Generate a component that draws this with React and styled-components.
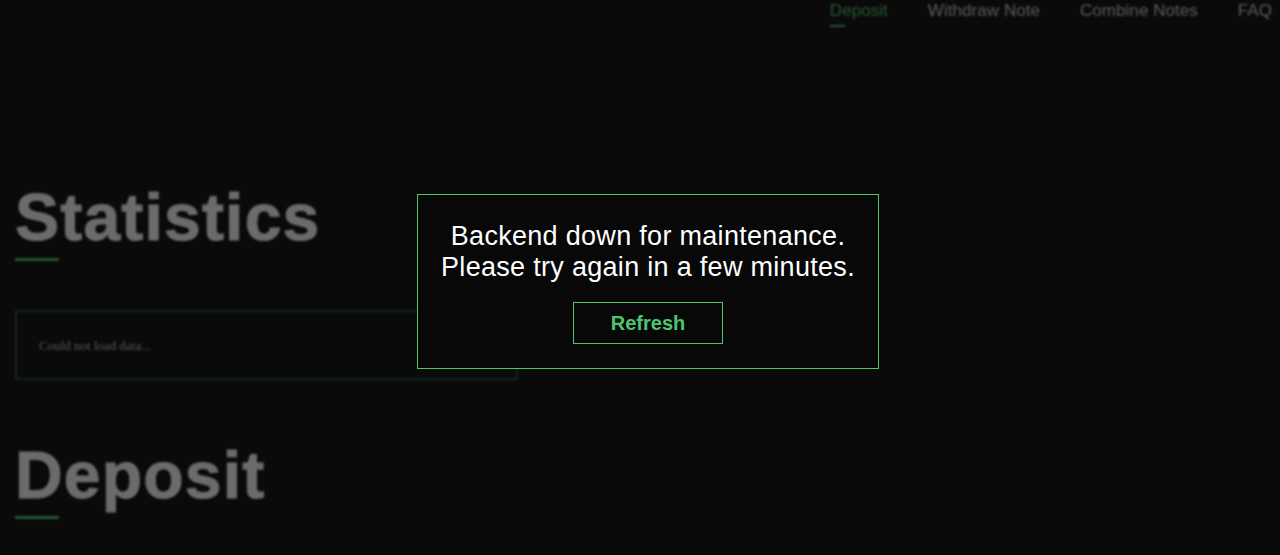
import styled, { createGlobalStyle } from "styled-components";

const GlobalStyle = createGlobalStyle`
  html, body {
    margin: 0;
    padding: 0;
    background: #0a0a0a;
    font-family: "Liberation Sans", Arial, sans-serif;
    overflow: hidden;
  }
`;

const Page = styled.div`
  width: 1280px;
  height: 555px;
  background: #0a0a0a;
  filter: blur(1.2px);
  opacity: 0.42;
`;

const Nav = styled.nav`
  display: flex;
  justify-content: flex-end;
  gap: 40px;
  padding: 0 8px 0 0;
  a {
    position: relative;
    color: #c8c8c8;
    font-size: 17px;
    line-height: 22px;
    letter-spacing: 0.05px;
    text-decoration: none;
  }
  a.active {
    color: #46c46c;
  }
  a.active::after {
    content: "";
    position: absolute;
    left: 0;
    top: 25px;
    width: 15px;
    height: 2px;
    background: #46c46c;
  }
`;

const Main = styled.main`
  padding: 0 15px;
`;

const Section = styled.section`
  margin-top: ${(p) => p.top}px;
`;

const Heading = styled.h1`
  margin: 0;
  color: #f2f2f2;
  font-size: 66px;
  font-weight: 900;
  line-height: 70px;
  letter-spacing: 1.2px;
  -webkit-text-stroke: 1px #f2f2f2;
`;

const Bar = styled.div`
  width: 44px;
  height: 3px;
  margin-top: 6px;
  background: #46c46c;
`;

const InfoBox = styled.div`
  width: 455px;
  height: 64px;
  margin-top: 49px;
  border: 2px solid #1f4d2c;
  display: flex;
  align-items: center;
  padding: 2px 22px 0;
  font-family: "Liberation Serif", "Times New Roman", serif;
  font-size: 13px;
  color: #bdbdbd;
`;

const Overlay = styled.div`
  position: fixed;
  inset: 0;
  display: flex;
  align-items: center;
  justify-content: center;
  padding: 8px 0 0 16px;
  box-sizing: border-box;
`;

const Modal = styled.div`
  width: 462px;
  box-sizing: border-box;
  border: 1px solid #4ec46f;
  background: #080808;
  padding: 26px 10px 24px;
  display: flex;
  flex-direction: column;
  align-items: center;
`;

const Message = styled.p`
  margin: 0;
  color: #ffffff;
  font-size: 27px;
  line-height: 31px;
  letter-spacing: 0.3px;
  text-align: center;
  white-space: nowrap;
`;

const RefreshButton = styled.button`
  margin-top: 19px;
  width: 150px;
  height: 42px;
  background: transparent;
  border: 1px solid #4ec46f;
  color: #4ec46f;
  font-family: "Liberation Sans", Arial, sans-serif;
  font-size: 20px;
  font-weight: 700;
  cursor: pointer;
`;

export default function App() {
  return (
    <>
      <GlobalStyle />
      <Page>
        <Nav>
          <a href="#" className="active">Deposit</a>
          <a href="#">Withdraw Note</a>
          <a href="#">Combine Notes</a>
          <a href="#">FAQ</a>
        </Nav>
        <Main>
          <Section top={160}>
            <Heading>Statistics</Heading>
            <Bar />
            <InfoBox>Could not load data...</InfoBox>
          </Section>
          <Section top={60}>
            <Heading>Deposit</Heading>
            <Bar />
          </Section>
        </Main>
      </Page>
      <Overlay>
        <Modal>
          <Message>
            Backend down for maintenance.
            <br />
            Please try again in a few minutes.
          </Message>
          <RefreshButton onClick={() => window.location.reload()}>Refresh</RefreshButton>
        </Modal>
      </Overlay>
    </>
  );
}
